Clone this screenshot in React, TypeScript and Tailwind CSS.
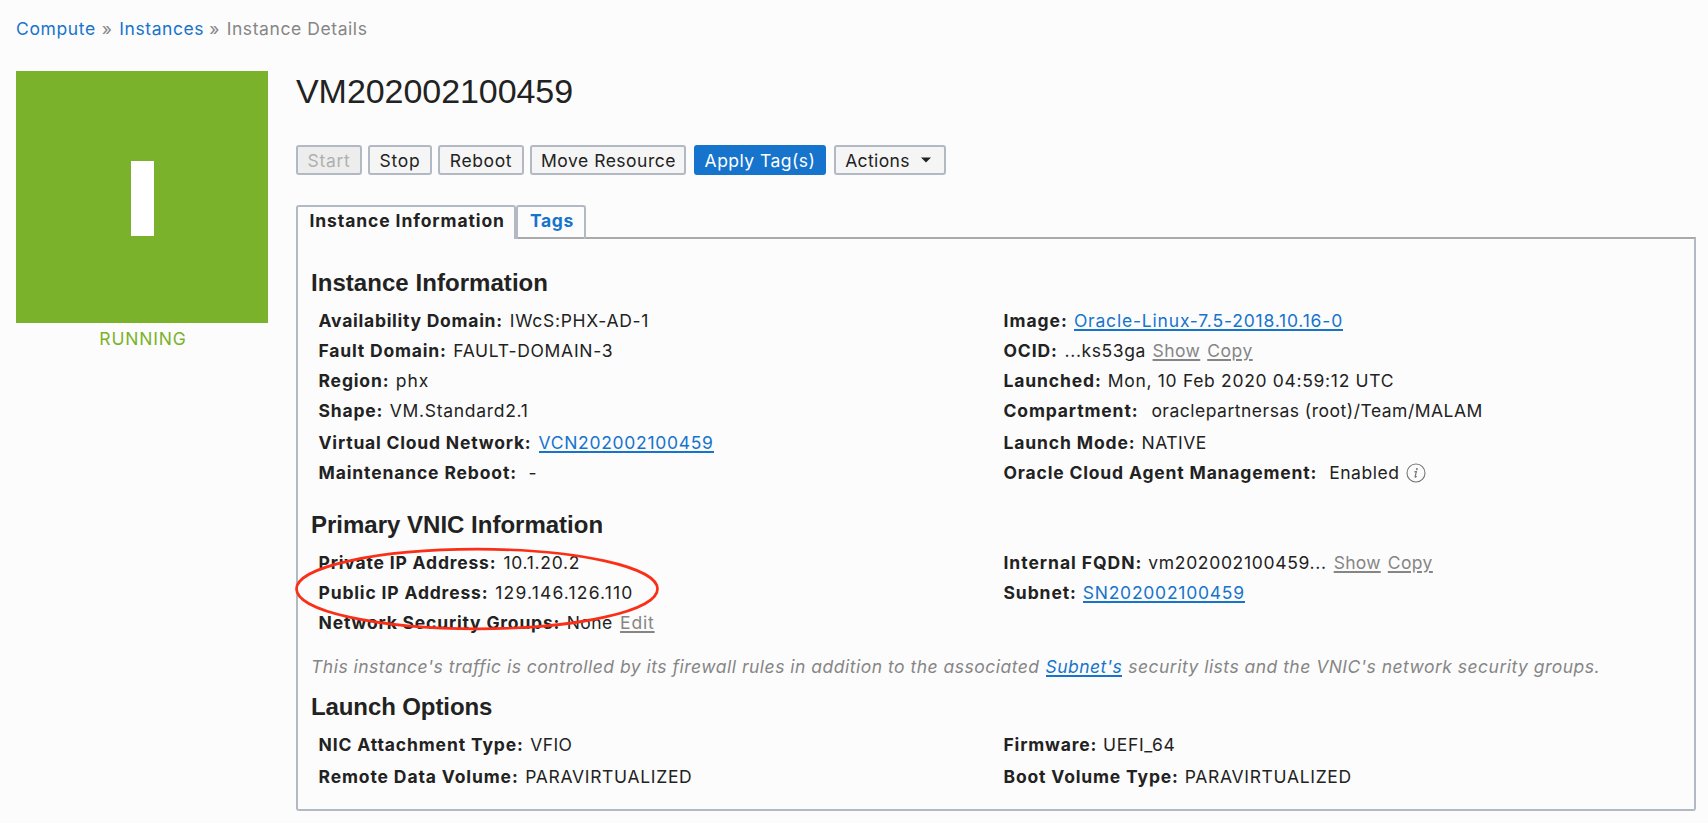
import React from "react";

type FieldProps = {
  label: string;
  lt: string;
  gap?: string;
  tall?: boolean;
  children: React.ReactNode;
};

function Field({ label, lt, gap = "ml-[6px]", tall = false, children }: FieldProps) {
  return (
    <div className={`flex items-center whitespace-pre leading-[30px] ${tall ? "pt-[2px]" : ""}`}>
      <span className={`font-bold ${lt}`}>{label}</span>
      <span className={`flex items-center ${gap}`}>{children}</span>
    </div>
  );
}

function BlueLink({ children, lt }: { children: React.ReactNode; lt: string }) {
  return (
    <a className={`relative inline-block text-[#1674cc] ${lt}`}>
      {children}
      <span className="absolute inset-x-0 bottom-[5px] h-[2px] bg-[#1674cc]" />
    </a>
  );
}

function GrayLink({ children, lt, ml }: { children: string; lt: string; ml: string }) {
  return (
    <a className={`text-[#868686] underline decoration-2 underline-offset-2 ${lt} ${ml}`}>
      {children}
    </a>
  );
}

function Heading({ children, className }: { children: string; className: string }) {
  return (
    <h2 className={`font-['Liberation_Sans',sans-serif] text-[24px] font-bold leading-[30px] ${className}`}>
      {children}
    </h2>
  );
}

const btn =
  "flex h-[30px] shrink-0 items-center justify-center rounded-[3px] border-2 border-[#b2b9c2] pt-[2px] whitespace-nowrap";

export default function App() {
  return (
    <div className="h-[823px] w-[1708px] overflow-hidden bg-[#fcfcfc] font-['Inter',sans-serif] text-[17.5px] text-[#222222]">
      <nav className="flex h-[71px] items-start pt-[14px] pl-4 leading-[30px] text-[#868686]">
        <a className="tracking-[0.63px] text-[#1674cc]">Compute</a>
        <span className="ml-[6px] w-[17px]">»</span>
        <a className="ml-[0.5px] tracking-[0.57px] text-[#1674cc]">Instances</a>
        <span className="ml-[5px] w-[17px]">»</span>
        <span className="ml-[0.5px] tracking-[0.58px]">Instance Details</span>
      </nav>

      <div className="flex">
        <aside className="ml-4 flex w-[252px] shrink-0 flex-col items-center">
          <div className="flex h-[252px] w-[252px] items-center justify-center bg-[#7ab22b]">
            <div className="mt-[3px] h-[75px] w-[23px] bg-white" />
          </div>
          <div className="pt-px pl-[2px] leading-[30px] tracking-[0.83px] text-[#7ab22b]">RUNNING</div>
        </aside>

        <main className="ml-7 w-[1400px] shrink-0">
          <h1 className="h-[74px] font-['Liberation_Sans',sans-serif] text-[34px] leading-[40px] tracking-[-0.06px]">
            VM202002100459
          </h1>

          <div className="flex">
            <button className={`${btn} w-[66px] bg-[#ededed] tracking-[0.69px] text-[#b0b0b0]`}>Start</button>
            <button className={`${btn} ml-[6px] w-[64px] bg-[#f5f5f5] tracking-[0.74px]`}>Stop</button>
            <button className={`${btn} ml-[6px] w-[86px] bg-[#f5f5f5] tracking-[0.62px]`}>Reboot</button>
            <button className={`${btn} ml-[6px] w-[156px] bg-[#f5f5f5] pl-px tracking-[0.5px]`}>Move Resource</button>
            <button className="ml-2 flex h-[30px] w-[132px] shrink-0 items-center justify-center rounded-[3px] bg-[#1674cc] pt-[2px] tracking-[0.47px] whitespace-nowrap text-white">
              Apply Tag(s)
            </button>
            <button className={`${btn} ml-2 w-[112px] gap-[11px] bg-[#f5f5f5] pr-1 tracking-[0.36px]`}>
              Actions
              <svg className="mb-[2px]" width="10" height="6" viewBox="0 0 10 6">
                <path d="M0 0.5h10L5 5.5z" fill="#222222" />
              </svg>
            </button>
          </div>

          <div className="relative z-10 mt-[30px] mb-[-2px] flex font-bold leading-[28px]">
            <div className="h-[34px] w-[220px] rounded-t-[3px] border-2 border-b-0 border-[#b2b9c2] bg-[#fcfcfc] pl-[11.5px] tracking-[0.9px] whitespace-nowrap">
              Instance Information
            </div>
            <div className="h-[34px] w-[70px] rounded-t-[3px] border-2 border-b-0 border-[#b2b9c2] pl-3 tracking-[0.62px] text-[#1674cc]">
              Tags
            </div>
          </div>

          <section className="relative h-[574px] w-[1400px] rounded-b-[3px] border-2 border-[#b2b9c2] border-t-[#aaaaaa] pt-[29px] pl-[13px]">
            <Heading className="tracking-[0.05px]">Instance Information</Heading>
            <div className="mt-[8px] flex pl-[7.5px]">
              <div className="w-[685px]">
                <Field label="Availability Domain:" lt="tracking-[0.73px]" gap="ml-[7px]">
                  <span className="tracking-[0.7px]">IWcS:PHX-AD-1</span>
                </Field>
                <Field label="Fault Domain:" lt="tracking-[0.82px]" gap="ml-[6.5px]">
                  <span className="tracking-[0.7px]">FAULT-DOMAIN-3</span>
                </Field>
                <Field label="Region:" lt="tracking-[0.84px]" gap="ml-[6.5px]">
                  <span className="tracking-[0.97px]">phx</span>
                </Field>
                <Field label="Shape:" lt="tracking-[0.83px]" gap="ml-[6.5px]">
                  <span className="tracking-[0.7px]">VM.Standard2.1</span>
                </Field>
                <Field label="Virtual Cloud Network:" lt="tracking-[0.8px]" gap="ml-[7px]" tall>
                  <BlueLink lt="tracking-[0.7px]">VCN202002100459</BlueLink>
                </Field>
                <Field label="Maintenance Reboot:" lt="tracking-[0.86px]" gap="ml-[11.5px]">
                  <span>-</span>
                </Field>
              </div>
              <div>
                <Field label="Image:" lt="tracking-[1px]">
                  <BlueLink lt="tracking-[0.81px]">Oracle-Linux-7.5-2018.10.16-0</BlueLink>
                </Field>
                <Field label="OCID:" lt="tracking-[0.85px]" gap="ml-[7px]">
                  <span className="tracking-[0.61px]">...ks53ga</span>
                  <GrayLink lt="tracking-[0.4px]" ml="ml-[6.5px]">Show</GrayLink>
                  <GrayLink lt="tracking-[0.5px]" ml="ml-[7px]">Copy</GrayLink>
                </Field>
                <Field label="Launched:" lt="tracking-[0.88px]">
                  <span className="tracking-[0.68px]">Mon, 10 Feb 2020 04:59:12 UTC</span>
                </Field>
                <Field label="Compartment:" lt="tracking-[0.87px]" gap="ml-[13px]">
                  <span className="tracking-[0.5px]">oraclepartnersas (root)/Team/MALAM</span>
                </Field>
                <Field label="Launch Mode:" lt="tracking-[0.87px]" tall>
                  <span className="tracking-[0.5px]">NATIVE</span>
                </Field>
                <Field label="Oracle Cloud Agent Management:" lt="tracking-[0.83px]" gap="ml-[12px]">
                  <span className="tracking-[0.53px]">Enabled</span>
                  <svg className="ml-[6.5px]" width="20" height="20" viewBox="0 0 20 20">
                    <circle cx="10" cy="10" r="9" fill="none" stroke="#777777" strokeWidth="1.1" />
                    <circle cx="10.9" cy="6" r="1" fill="#777777" />
                    <path d="M8.4 8.9l2-.4-1.3 5.2q-.1.7.5.4l1.1-.8" fill="none" stroke="#777777" strokeWidth="1.2" />
                  </svg>
                </Field>
              </div>
            </div>

            <Heading className="mt-[22px]">Primary VNIC Information</Heading>
            <div className="mt-[8px] flex pl-[7.5px]">
              <div className="w-[685px]">
                <Field label="Private IP Address:" lt="tracking-[0.82px]" gap="ml-[7px]">
                  <span className="tracking-[0.7px]">10.1.20.2</span>
                </Field>
                <Field label="Public IP Address:" lt="tracking-[0.83px]" gap="ml-[7px]">
                  <span className="tracking-[1.16px]">129.146.126.110</span>
                </Field>
                <Field label="Network Security Groups:" lt="tracking-[0.81px]" gap="ml-[6.5px]">
                  <span className="tracking-[0.4px]">None</span>
                  <GrayLink lt="tracking-[0.84px]" ml="ml-[7.5px]">Edit</GrayLink>
                </Field>
              </div>
              <div>
                <Field label="Internal FQDN:" lt="tracking-[0.96px]">
                  <span className="tracking-[0.67px]">vm202002100459...</span>
                  <GrayLink lt="tracking-[0.25px]" ml="ml-[7px]">Show</GrayLink>
                  <GrayLink lt="tracking-[0.4px]" ml="ml-[7px]">Copy</GrayLink>
                </Field>
                <Field label="Subnet:" lt="tracking-[0.9px]">
                  <BlueLink lt="tracking-[0.75px]">SN202002100459</BlueLink>
                </Field>
              </div>
            </div>

            <p className="mt-[14px] flex leading-[30px] whitespace-pre text-[#868686] italic">
              <span className="tracking-[0.495px]">
                This instance's traffic is controlled by its firewall rules in addition to the associated
              </span>
              <span className="ml-[6px]">
                <BlueLink lt="tracking-[0.47px]">Subnet's</BlueLink>
              </span>
              <span className="ml-[6px] tracking-[0.48px]">
                security lists and the VNIC's network security groups.
              </span>
            </p>

            <Heading className="mt-[10px] tracking-[-0.1px]">Launch Options</Heading>
            <div className="mt-[8px] flex pl-[7.5px]">
              <div className="w-[685px]">
                <Field label="NIC Attachment Type:" lt="tracking-[0.87px]" gap="ml-[6.5px]">
                  <span className="tracking-[0.4px]">VFIO</span>
                </Field>
                <Field label="Remote Data Volume:" lt="tracking-[0.88px]" gap="ml-[6.5px]" tall>
                  <span className="tracking-[0.69px]">PARAVIRTUALIZED</span>
                </Field>
              </div>
              <div>
                <Field label="Firmware:" lt="tracking-[0.82px]">
                  <span className="tracking-[0.65px]">UEFI_64</span>
                </Field>
                <Field label="Boot Volume Type:" lt="tracking-[0.84px]" tall>
                  <span className="tracking-[0.68px]">PARAVIRTUALIZED</span>
                </Field>
              </div>
            </div>

            <svg
              className="pointer-events-none absolute top-[308px] left-[-4px]"
              width="368"
              height="86"
              viewBox="0 0 368 86"
            >
              <ellipse cx="183" cy="42" rx="180.5" ry="39.8" fill="none" stroke="#fb2f17" strokeWidth="2.7" />
            </svg>
          </section>
        </main>
      </div>
    </div>
  );
}
